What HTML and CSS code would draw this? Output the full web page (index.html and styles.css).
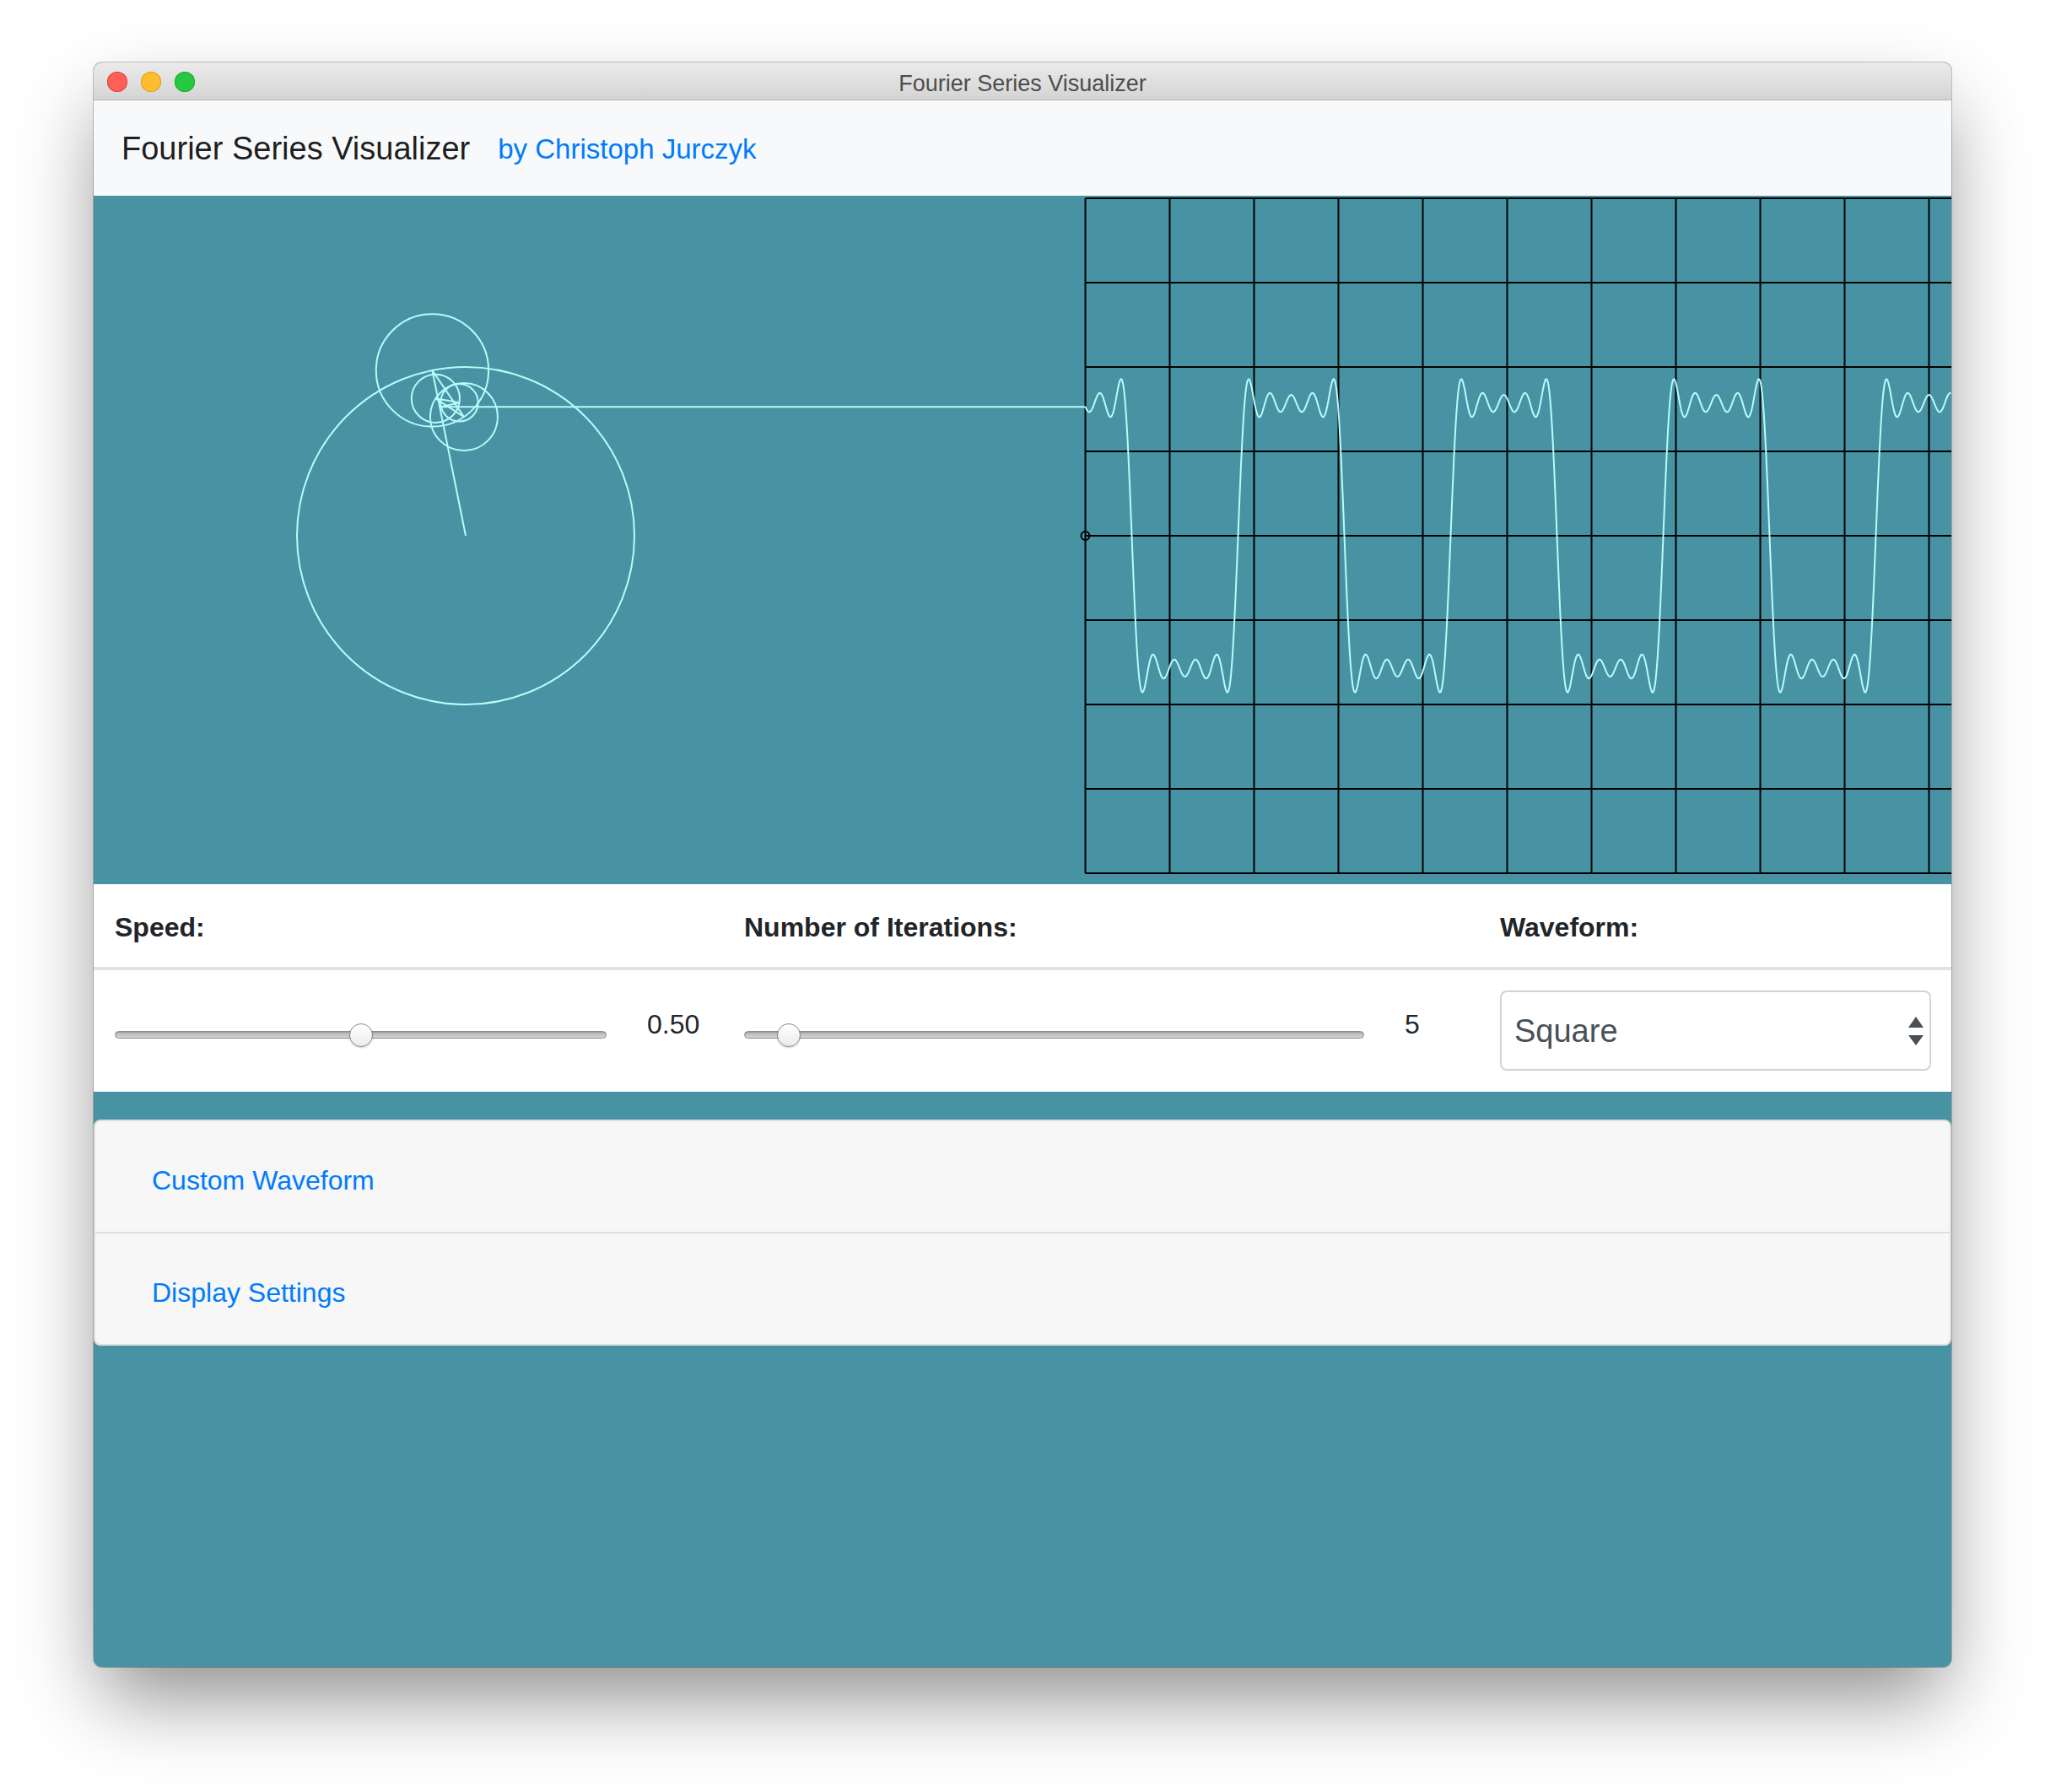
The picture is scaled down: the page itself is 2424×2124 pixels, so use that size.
FILE: index.html
```html
<!DOCTYPE html>
<html lang="en">
<head>
  <meta charset="UTF-8" />
  <title>Fourier Series Visualizer</title>
  <link rel="stylesheet" href="styles.css">
</head>
<body>
  <div class="desktop">
    <div class="window">
      <div class="titlebar">
        <div class="lights">
          <span class="light red"></span>
          <span class="light yellow"></span>
          <span class="light green"></span>
        </div>
        <div class="wintitle">Fourier Series Visualizer</div>
        <div></div>
      </div>

      <nav class="navbar">
        <span class="brand">Fourier Series Visualizer</span>
        <a class="author" href="#">by Christoph Jurczyk</a>
      </nav>

      <div class="stage">
        <svg id="plot" width="2202" height="816" viewBox="0 0 2202 816"></svg>
      </div>

      <div class="controls">
        <div class="th first span2">Speed:</div>
        <div class="th span2">Number of Iterations:</div>
        <div class="th">Waveform:</div>

        <div class="td first">
          <input class="slider" type="range" id="speed" min="0" max="1" step="0.01" value="0.5">
        </div>
        <div class="td value">0.50</div>
        <div class="td">
          <input class="slider" type="range" id="iterations" min="1" max="75" step="1" value="5">
        </div>
        <div class="td value">5</div>
        <div class="td pick">
          <div class="select-wrap">
            <select class="waveform" id="waveform">
              <option>Square</option>
              <option>Sawtooth</option>
              <option>Triangle</option>
              <option>Custom</option>
            </select>
            <svg class="select-arrows" width="18" height="34" viewBox="0 0 18 34">
              <polygon points="0,13 9,0 18,13" />
              <polygon points="0,22 18,22 9,34" />
            </svg>
          </div>
        </div>
      </div>

      <div class="accordion">
        <div class="panel-head"><a href="#">Custom Waveform</a></div>
        <div class="panel-head"><a href="#">Display Settings</a></div>
      </div>
    </div>
  </div>

  <script>
    const NS = "http://www.w3.org/2000/svg";
    const plot = document.getElementById("plot");

    const center = { x: 441, y: 403 };
    const radius = 200;
    const iterations = 5;
    const phase = 1.77;
    const period = 252;
    const graphLeft = 1175.5;
    const graphRight = 2202;

    function add(tag, attrs) {
      const el = document.createElementNS(NS, tag);
      for (const key in attrs) el.setAttribute(key, attrs[key]);
      plot.appendChild(el);
      return el;
    }

    // grid
    for (let x = graphLeft; x < graphRight; x += 100) {
      add("line", { x1: x, y1: 3, x2: x, y2: 803, class: "grid" });
    }
    for (let y = 3; y <= 803; y += 100) {
      add("line", { x1: graphLeft, y1: y, x2: graphRight, y2: y, class: "grid" });
    }
    add("circle", { cx: graphLeft, cy: center.y, r: 5, class: "origin" });

    // epicycles
    let x = center.x, y = center.y;
    for (let i = 0; i < iterations; i++) {
      const n = 2 * i + 1;
      const r = radius / n;
      add("circle", { cx: x, cy: y, r: r, class: "trace" });
      const nx = x + r * Math.cos(n * phase);
      const ny = y - r * Math.sin(n * phase);
      add("line", { x1: x, y1: y, x2: nx, y2: ny, class: "trace" });
      x = nx;
      y = ny;
    }
    add("line", { x1: x, y1: y, x2: graphLeft, y2: y, class: "trace" });

    // wave
    const points = [];
    for (let px = graphLeft; px <= graphRight; px += 1) {
      const t = phase + 2 * Math.PI * (px - graphLeft) / period;
      let v = 0;
      for (let i = 0; i < iterations; i++) {
        const n = 2 * i + 1;
        v += radius / n * Math.sin(n * t);
      }
      points.push(px.toFixed(1) + "," + (center.y - v).toFixed(1));
    }
    add("polyline", { points: points.join(" "), class: "trace" });
  </script>
</body>
</html>
```

FILE: styles.css
```css
* {
  box-sizing: border-box;
}
body {
  margin: 0;
  background: #fff;
  font-family: "Liberation Sans", Arial, sans-serif;
  color: #212529;
  overflow: hidden;
}
.desktop {
  padding: 74px 0 0 111px;
  height: 2124px;
}
.window {
  width: 2202px;
  height: 1902px;
  border-radius: 10px;
  overflow: hidden;
  background: #4893a3;
  display: flex;
  flex-direction: column;
  box-shadow: 0 0 0 1px rgba(0,0,0,0.22), 0 45px 90px -10px rgba(0,0,0,0.45);
}

/* title bar */
.titlebar {
  flex: none;
  height: 45px;
  display: grid;
  grid-template-columns: 1fr auto 1fr;
  align-items: center;
  padding: 0 16px;
  background: linear-gradient(#ebebeb, #d4d4d4);
  border-bottom: 1px solid #b5b5b5;
}
.lights {
  display: flex;
  gap: 16px;
  margin-top: 2px;
}
.light {
  width: 24px;
  height: 24px;
  border-radius: 50%;
}
.red { background: #fe5f57; box-shadow: inset 0 0 0 1px #e0443e; }
.yellow { background: #febc2e; box-shadow: inset 0 0 0 1px #dea123; }
.green { background: #28c840; box-shadow: inset 0 0 0 1px #1aab29; }
.wintitle {
  font-size: 27px;
  color: #4d4d4d;
  margin-top: 6px;
}

/* navbar */
.navbar {
  flex: none;
  height: 113px;
  display: flex;
  align-items: center;
  gap: 33px;
  padding: 2px 33px 0;
  background: #f8f9fa;
}
.brand {
  font-size: 38px;
  color: rgba(0,0,0,0.9);
}
.author {
  font-size: 33px;
  color: #007bff;
  text-decoration: none;
}

/* canvas */
.stage {
  flex: none;
  height: 816px;
  background: #4893a3;
}
.stage svg {
  display: block;
}
.grid {
  stroke: #000;
  stroke-width: 2;
}
.trace {
  stroke: #b9fafa;
  stroke-width: 2;
  fill: none;
}
.origin {
  stroke: #000;
  stroke-width: 2;
  fill: none;
}

/* controls table */
.controls {
  flex: none;
  display: grid;
  grid-template-columns: 632px 115px 783px 113px 1fr;
  background: #fff;
}
.th {
  font-size: 32px;
  font-weight: bold;
  line-height: 48px;
  padding: 27px 24px 23px;
  border-bottom: 4px solid #dee2e6;
}
.span2 {
  grid-column: span 2;
}
.td {
  padding: 24px;
}
.first {
  padding-left: 25px;
}
.value {
  font-size: 32px;
  line-height: 48px;
  padding-top: 40px;
}
.pick {
  padding-bottom: 25px;
}
.slider {
  -webkit-appearance: none;
  appearance: none;
  display: block;
  width: 100%;
  height: 30px;
  margin: 37px 0 0;
  background: transparent;
}
.slider::-webkit-slider-runnable-track {
  height: 9px;
  border-radius: 5px;
  border: 1px solid #8c8c8c;
  background: linear-gradient(#b2b2b2, #d6d6d6);
  box-shadow: inset 0 1px 1px rgba(0,0,0,0.15);
}
.slider::-webkit-slider-thumb {
  -webkit-appearance: none;
  width: 28px;
  height: 28px;
  margin-top: -10px;
  border-radius: 50%;
  border: 1px solid #8a8a8a;
  background: linear-gradient(#ffffff, #ebebeb);
  box-shadow: 0 1px 2px rgba(0,0,0,0.2);
}
.select-wrap {
  position: relative;
}
.waveform {
  -webkit-appearance: none;
  appearance: none;
  display: block;
  width: 100%;
  height: 95px;
  padding: 0 60px 0 15px;
  border: 2px solid #ced4da;
  border-radius: 8px;
  background: #fff;
  font-family: "Liberation Sans", Arial, sans-serif;
  font-size: 38px;
  color: #495057;
}
.select-arrows {
  position: absolute;
  top: 31px;
  right: 9px;
  fill: #4a4f55;
}

/* accordion */
.accordion {
  flex: none;
  margin-top: 33px;
  background: #f7f7f7;
  border: 2px solid #dedede;
  border-radius: 8px;
}
.panel-head {
  padding: 46px 0 37px 67px;
  font-size: 32px;
  line-height: 48px;
}
.panel-head + .panel-head {
  border-top: 2px solid #dedede;
}
.panel-head a {
  color: #007bff;
  text-decoration: none;
}
```
